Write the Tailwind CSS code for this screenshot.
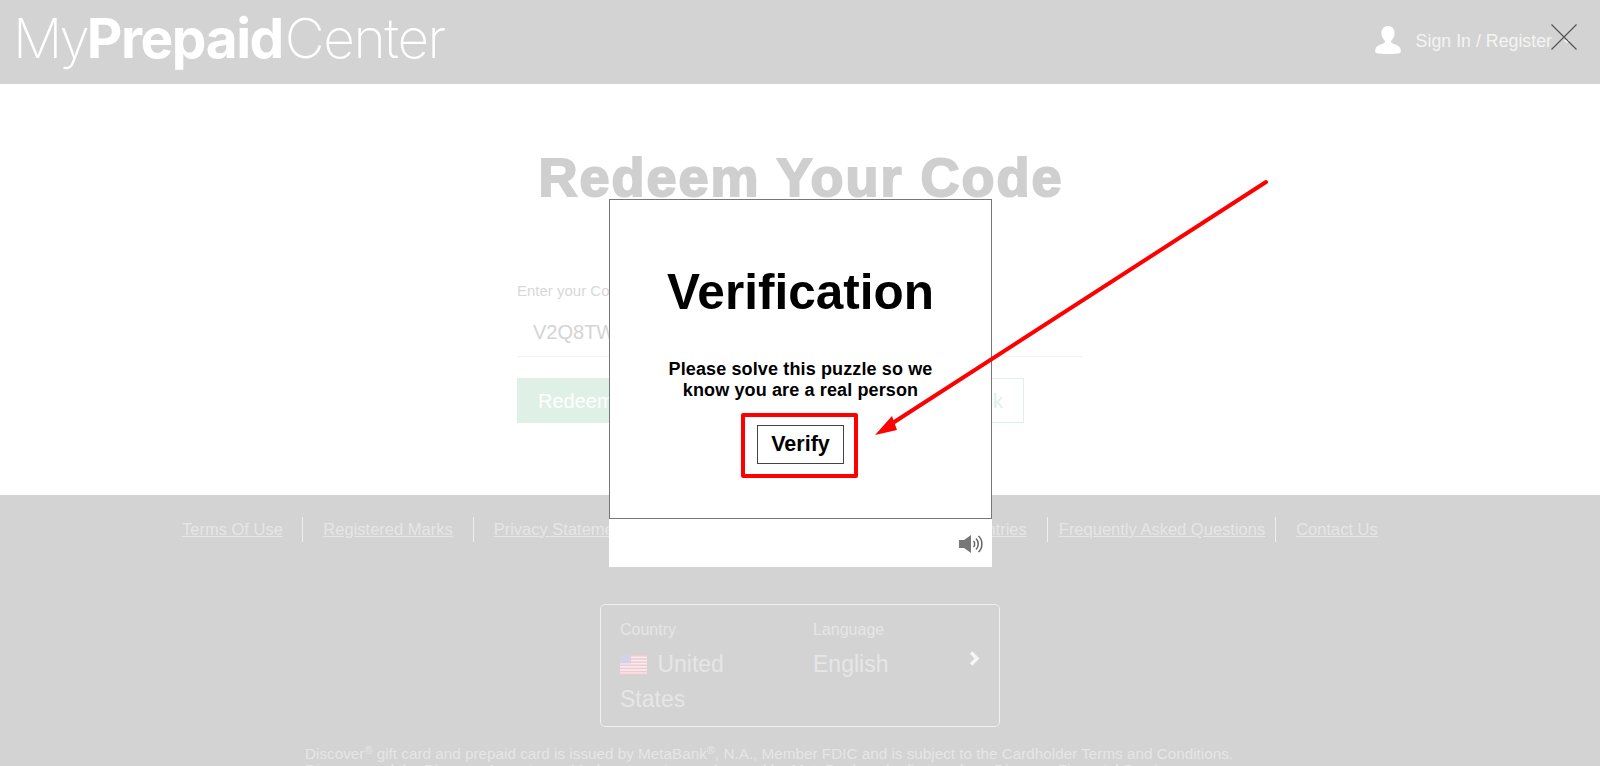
<!DOCTYPE html>
<html lang="en">
<head>
  <meta charset="UTF-8" />
  <title>MyPrepaidCenter - Redeem Your Code</title>
  <script src="https://cdn.jsdelivr.net/npm/@tailwindcss/browser@4"></script>
</head>
<body class="relative h-[766px] overflow-hidden bg-white font-['Liberation_Sans',sans-serif]">

  <!-- header -->
  <header class="flex h-[84px] items-center justify-between bg-[#d3d3d3] pl-[13px] pr-[48px]">
    <div class="font-['Inter',sans-serif] text-[55px] leading-none tracking-[-0.026em] text-white font-extralight pb-[8px]"><span class="tracking-[-3px]">My</span><span class="font-bold">Prepaid</span><span class="ml-[2px]">Center</span></div>
    <div class="flex items-center gap-[15px] pb-[2px] text-[17.8px] text-[#f4f4f4]">
      <svg class="mb-[3px] h-[28px] w-[26px]" viewBox="0 0 27 30" preserveAspectRatio="none" fill="#fff"><path d="M13.5 0c4.200 0 6.800 3.100 6.800 7.400 0 3.400-1.500 6.300-3.200 8.100-.8.900-.6 2.200.4 2.800 2.600 1.400 7 2.400 8.600 5.200.9 1.600 1 4 .3 4.900-1.300 1.400-6.500 1.600-12.900 1.600S1.900 29.800.6 28.400c-.7-.9-.6-3.300.3-4.900 1.600-2.800 6-3.800 8.600-5.200 1-.6 1.200-1.900.4-2.800-1.700-1.800-3.200-4.700-3.200-8.100C6.700 3.100 9.300 0 13.500 0z"/></svg>
      <span>Sign In / Register</span>
    </div>
  </header>

  <!-- redeem form -->
  <main class="h-[411px] bg-white pt-[62px]">
    <h1 class="pl-[2px] text-center text-[54px] leading-[62px] font-bold tracking-[2px] text-[#cfcfcf] [-webkit-text-stroke:2px_#cfcfcf]">Redeem Your Code</h1>
    <div class="mx-auto mt-[73px] w-[566px]">
      <label class="block text-[15px] leading-[20px] text-[#d8d8d8]">Enter your Code</label>
      <div class="mt-[10px] h-[46px] border-b border-[#f2f2f2] pl-[16px] text-[20px] leading-[42px] text-[#d4d4d4]">V2Q8TW</div>
      <div class="mt-[21px] flex items-stretch gap-[12px]">
        <button class="h-[45px] w-[240px] bg-[#dff0e7] pl-[21px] text-left text-[20px] text-white">Redeem</button>
        <button class="ml-auto mr-[59px] h-[45px] w-[200px] border border-[#dff0e7] pr-[20px] text-right text-[20px] text-[#dff0e7]">Check</button>
      </div>
    </div>
  </main>

  <!-- footer -->
  <footer class="h-[271px] bg-[#d3d3d3] text-[#e6e6e6]">
    <nav class="flex pl-[182px] pt-[22px] text-[16.5px] leading-[25px]">
      <a class="underline pr-[19.500px] border-r border-[#efefef]" href="#">Terms Of Use</a>
      <a class="underline px-[20px] border-r border-[#efefef]" href="#">Registered Marks</a>
      <a class="underline px-[20px] border-r border-[#efefef]" href="#">Privacy Statement</a>
      <a class="underline px-[14px] border-r border-[#efefef]" href="#">Consumer Information</a>
      <a class="underline px-[20px] border-r border-[#efefef]" href="#">Participating Countries</a>
      <a class="underline pl-[11px] pr-[10px] border-r border-[#efefef]" href="#">Frequently Asked Questions</a>
      <a class="underline pl-[20px]" href="#">Contact Us</a>
    </nav>

    <div class="mx-auto mt-[62px] flex h-[123px] w-[400px] rounded-[5px] border border-[#f0f0f0] pl-[19px] pt-[15px]">
      <div class="w-[193px]">
        <div class="text-[16px] leading-[20px]">Country</div>
        <div class="mt-[7px] w-[140px] text-[23px] leading-[35px]">
          <svg class="mr-[4px] inline-block h-[20px] w-[27px] align-[-3px]" viewBox="0 0 27 19" preserveAspectRatio="none">
            <rect width="27" height="19" fill="#f6f0f2"/>
            <rect y="0" width="27" height="1.500" fill="#f3c9cf"/>
            <rect y="3" width="27" height="1.500" fill="#f3c9cf"/>
            <rect y="6" width="27" height="1.500" fill="#f3c9cf"/>
            <rect y="9" width="27" height="1.500" fill="#f3c9cf"/>
            <rect y="12" width="27" height="1.500" fill="#f3c9cf"/>
            <rect y="15" width="27" height="1.500" fill="#f3c9cf"/>
            <rect y="17.500" width="27" height="1.500" fill="#f3c9cf"/>
            <rect width="11" height="8" fill="#d2d3e6"/>
          </svg>
          United States
        </div>
      </div>
      <div class="w-[140px]">
        <div class="text-[16px] leading-[20px]">Language</div>
        <div class="mt-[7px] text-[23px] leading-[35px]">English</div>
      </div>
      <svg class="mt-[31px] ml-[16px] h-[15px] w-[11px]" viewBox="0 0 11 15" fill="none" stroke="#f6f6f6" stroke-width="3.500"><path d="M2 1.500l6 6-6 6"/></svg>
    </div>

    <p class="mt-[19px] whitespace-nowrap pl-[305px] text-[15.27px] leading-[16px]">Discover<sup class="text-[11px]">®</sup> gift card and prepaid card is issued by MetaBank<sup class="text-[11px]">®</sup>, N.A., Member FDIC and is subject to the Cardholder Terms and Conditions.<br>Discover and the Discover Acceptance Mark are service marks used by MetaBank under license from Discover Financial Services.</p>
  </footer>

  <!-- close button over the page, with the menu caret showing through -->
  <svg class="absolute left-[1551px] top-[24px] h-[26px] w-[26px]" viewBox="0 0 26 26">
    <path d="M13 16h6l-3 3z" fill="#fff"/>
    <path d="M.5.5l25 25M25.500.5l-25 25" stroke="#555" stroke-width="1.200"/>
  </svg>

  <!-- verification dialog -->
  <div class="absolute left-[609px] top-[199px] w-[383px] bg-white">
    <div class="h-[320px] border border-[#777] pt-[61px] text-center text-black">
      <h2 class="text-[49.5px] leading-[62px] font-bold">Verification</h2>
      <p class="mt-[36px] text-[18px] leading-[21px] font-bold tracking-[0.007em]">Please solve this puzzle so we<br>know you are a real person</p>
      <div class="ml-[131px] mt-[12px] flex h-[65px] w-[117px] items-start rounded-[2px] border-[4px] border-[#fe0000] pl-[12px] pt-[8px]">
        <button class="h-[39px] w-[87px] border border-[#444] text-[21.5px] leading-none font-bold">Verify</button>
      </div>
    </div>
    <div class="flex h-[48px] justify-end pr-[8px] pt-[15px]">
      <svg class="h-[20px] w-[25px]" viewBox="0 0 25 20" fill="none" stroke="#666"><path d="M0 6h5l7-5v18l-7-5H0z" fill="#777" stroke="none"/><path d="M14.500 7c1.500 1.500 1.500 4.500 0 6M17 4.500c3 3 3 8 0 11M19.500 2c4.500 4 4.500 12 0 16" stroke-width="1.500"/></svg>
    </div>
  </div>

  <!-- annotation arrow -->
  <svg class="absolute left-0 top-0 h-[766px] w-[1600px]" viewBox="0 0 1600 766" fill="#fe0000">
    <path d="M1266 182L888 426" stroke="#fe0000" stroke-width="4" stroke-linecap="round"/>
    <path d="M875 435L892 416L897 430Z"/>
  </svg>
</body>
</html>
